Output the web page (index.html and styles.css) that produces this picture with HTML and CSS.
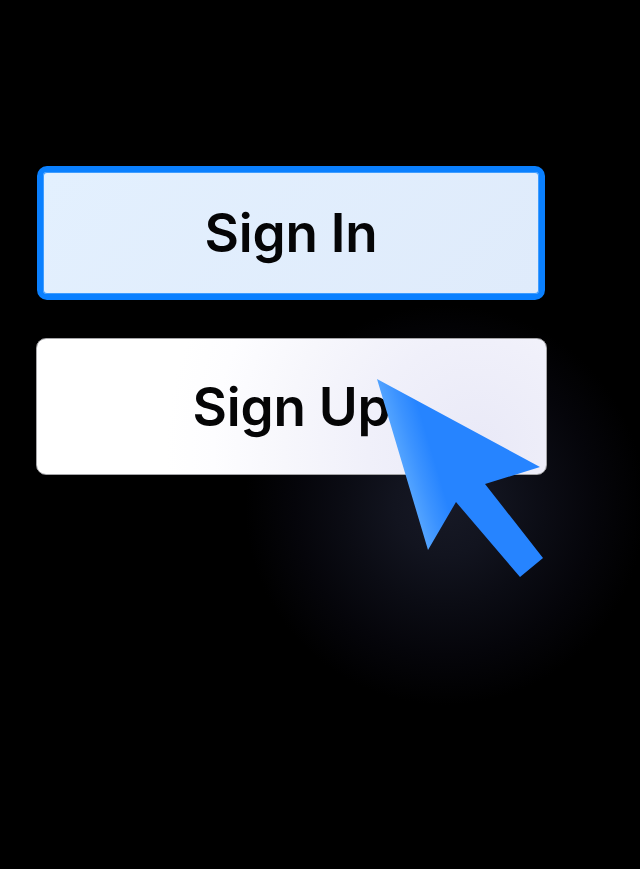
FILE: index.html
```html
<!DOCTYPE html>
<html lang="en">
<head>
<meta charset="utf-8">
<title>Sign In</title>
<link rel="stylesheet" href="styles.css">
</head>
<body>
<main class="stage">
  <div class="actions">
    <button class="btn btn-in" type="button">Sign In</button>
    <button class="btn btn-up" type="button">Sign Up</button>
  </div>
  <svg class="cursor" width="640" height="869" viewBox="0 0 640 869" aria-hidden="true">
    <defs>
      <linearGradient id="cursorFill" gradientUnits="userSpaceOnUse" x1="399" y1="462" x2="432" y2="452">
        <stop offset="0" stop-color="#56a6ff"/>
        <stop offset="0.5" stop-color="#3c93ff"/>
        <stop offset="1" stop-color="#2684ff"/>
      </linearGradient>
    </defs>
    <path d="M377 379 L540 467 L485 484 L543 558 L520 577 L456 502 L428 550 Z" fill="url(#cursorFill)"/>
  </svg>
</main>
</body>
</html>
```
FILE: styles.css
```css
* { box-sizing: border-box; }
html, body { margin: 0; height: 100%; background: #000; }
.stage {
  position: relative;
  width: 640px;
  height: 869px;
  overflow: hidden;
  padding: 166px 93px 0 36px;
  background: radial-gradient(circle 200px at 445px 505px, #171926 0%, #12141f 25%, #0b0c14 50%, #05050a 75%, #000 100%);
}
.actions { display: flex; flex-direction: column; gap: 38px; }
.btn {
  display: block;
  font-family: Inter, "Noto Sans", sans-serif;
  font-weight: 600;
  font-size: 53px;
  letter-spacing: -0.2px;
  color: #050506;
  text-align: center;
  padding: 0;
}
.btn-in {
  width: 508px;
  height: 134px;
  margin-left: 1px;
  border: 6px solid #0a80ff;
  border-radius: 10px;
  background: linear-gradient(135deg, #e3f0fe 0%, #dfebfb 100%);
  box-shadow: inset 0 0 0 1px #3f9dff;
}
.btn-up {
  width: 511px;
  height: 137px;
  border: 1px solid #a5a5a8;
  border-radius: 10px;
  background: radial-gradient(circle 310px at 440px 110px, #e9e9f7 0%, #f0f0fa 35%, #f7f7fc 62%, #fdfdff 85%, #fff 100%);
}
.cursor { position: absolute; left: 0; top: 0; }
```
